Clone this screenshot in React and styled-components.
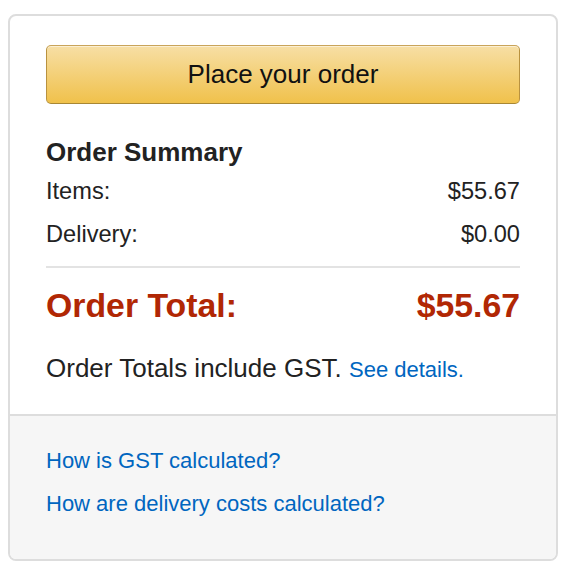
import React from "react";
import styled, { createGlobalStyle } from "styled-components";

const Global = createGlobalStyle`
  body {
    margin: 0;
    padding: 14px 12px 0 8px;
    font-family: "Liberation Sans", Arial, sans-serif;
    color: #111;
    background: #fff;
  }
`;

const Card = styled.div`
  width: 550px;
  box-sizing: border-box;
  border: 2px solid #ddd;
  border-radius: 8px;
  overflow: hidden;
`;

const Top = styled.div`
  padding: 29px 36px 26px;
`;

const OrderButton = styled.button`
  display: block;
  width: 100%;
  height: 59px;
  box-sizing: border-box;
  border: 1px solid;
  border-color: #c9a45a #b9923f #a88734;
  border-radius: 5px;
  background: linear-gradient(to bottom, #f7dfa5, #f0c14b);
  box-shadow: inset 0 1px 0 rgba(255, 255, 255, 0.5);
  font-family: inherit;
  font-size: 26px;
  color: #111;
  cursor: pointer;
`;

const Heading = styled.h3`
  margin: 31px 0 0;
  font-size: 26px;
  line-height: 35px;
  font-weight: bold;
  color: #222;
`;

const Row = styled.div`
  display: flex;
  justify-content: space-between;
  font-size: 23.6px;
  line-height: 43px;
  color: #222;
`;

const Divider = styled.hr`
  margin: 10px 0 0;
  border: 0;
  border-top: 2px solid #e3e3e3;
`;

const TotalRow = styled.div`
  display: flex;
  justify-content: space-between;
  margin-top: 17px;
  font-size: 33.8px;
  line-height: 40px;
  font-weight: bold;
  color: #b12704;
`;

const Note = styled.p`
  margin: 25px 0 0;
  font-size: 26px;
  line-height: 36px;
  color: #222;
`;

const Link = styled.a`
  display: block;
  color: #0066c0;
  text-decoration: none;
  font-size: ${(p) => p.$size || "22px"};
  line-height: 43px;
`;

const InlineLink = styled(Link)`
  display: inline;
  line-height: inherit;
`;

const Bottom = styled.div`
  background: #f6f6f6;
  border-top: 2px solid #ddd;
  padding: 23px 36px 34px;
`;

export default function App() {
  return (
    <>
      <Global />
      <Card>
        <Top>
          <OrderButton>Place your order</OrderButton>
          <Heading>Order Summary</Heading>
          <Row>
            <span>Items:</span>
            <span>$55.67</span>
          </Row>
          <Row>
            <span>Delivery:</span>
            <span>$0.00</span>
          </Row>
          <Divider />
          <TotalRow>
            <span>Order Total:</span>
            <span>$55.67</span>
          </TotalRow>
          <Note>
            Order Totals include GST. <InlineLink href="#">See details.</InlineLink>
          </Note>
        </Top>
        <Bottom>
          <Link href="#">How is GST calculated?</Link>
          <Link href="#">How are delivery costs calculated?</Link>
        </Bottom>
      </Card>
    </>
  );
}
